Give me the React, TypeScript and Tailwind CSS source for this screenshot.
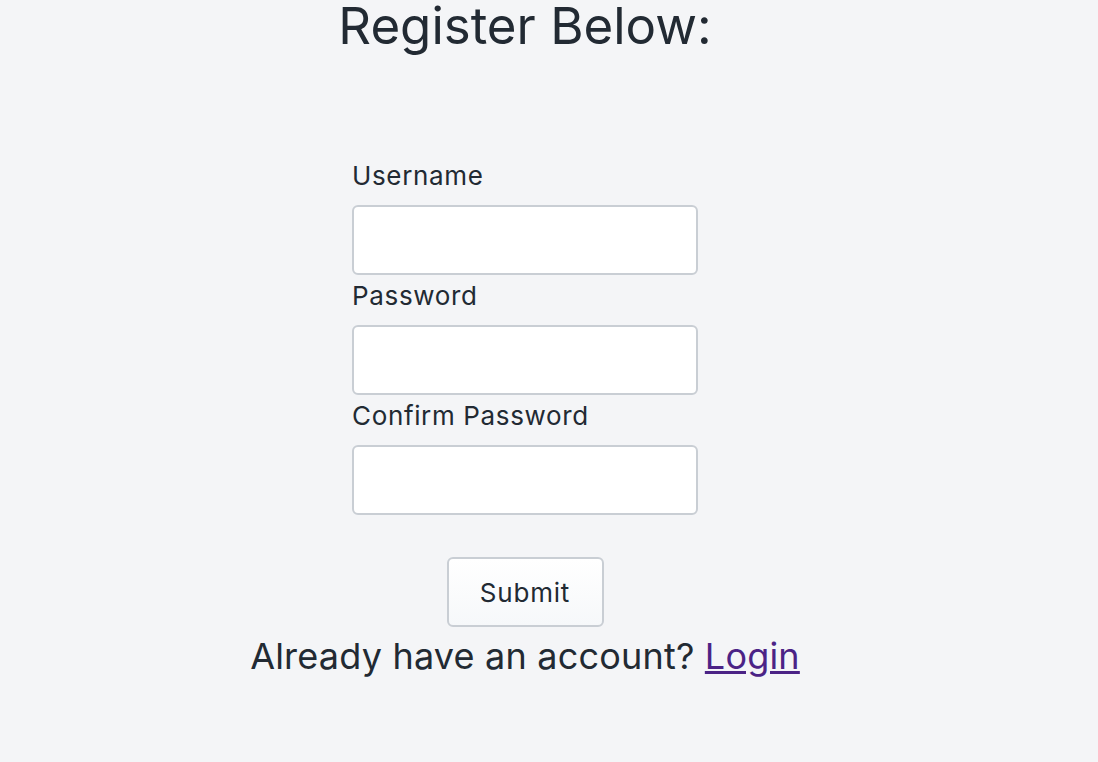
export default function App() {
  return (
    <div className="min-h-[762px] w-full bg-[#f4f5f7] text-[#222a33]" style={{ fontFamily: "Inter, 'Noto Sans', sans-serif" }}>
      <div className="w-[1050px] flex flex-col items-center">
        <h1 className="text-[51px] leading-[51px] font-normal">Register Below:</h1>
        <form className="mt-[110px] w-[346px] flex flex-col" onSubmit={(e) => e.preventDefault()}>
          <label className="text-[26px] leading-[30px] h-[44px] tracking-[0.65px]">Username</label>
          <input className="h-[70px] w-full bg-white border-2 border-[#c9ced4] rounded-[6px]" />
          <label className="text-[26px] leading-[30px] h-[44px] mt-[6px] tracking-[0.65px]">Password</label>
          <input type="password" className="h-[70px] w-full bg-white border-2 border-[#c9ced4] rounded-[6px]" />
          <label className="text-[26px] leading-[30px] h-[44px] mt-[6px] tracking-[0.65px]">Confirm Password</label>
          <input type="password" className="h-[70px] w-full bg-white border-2 border-[#c9ced4] rounded-[6px]" />
          <div className="flex justify-center mt-[42px]">
            <button className="w-[157px] h-[70px] bg-gradient-to-b from-white to-[#f6f8fa] border-2 border-[#c9ced4] rounded-[6px] text-[26px] tracking-[0.8px]">Submit</button>
          </div>
        </form>
        <p className="text-[36px] leading-[44px] mt-[7px] tracking-[0.2px]">
          Already have an account? <a href="#" className="text-[#4b2386] underline">Login</a>
        </p>
      </div>
    </div>
  );
}
